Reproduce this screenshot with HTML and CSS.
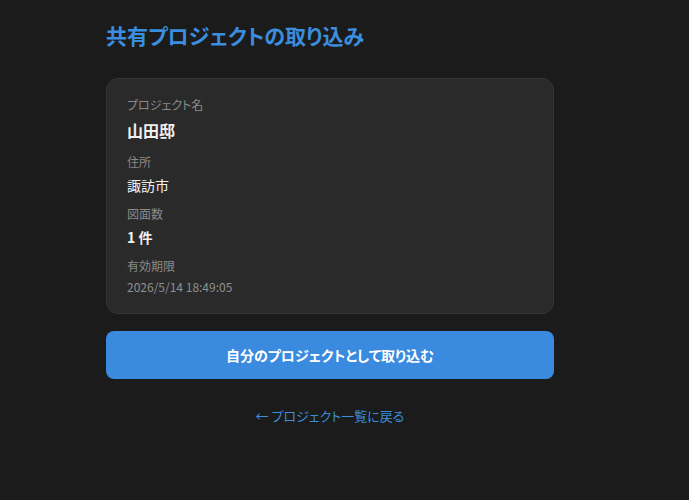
FILE: index.html
```html
<!DOCTYPE html>
<html lang="ja">
<head>
<meta charset="utf-8">
<title>共有プロジェクトの取り込み</title>
<link rel="stylesheet" href="styles.css">
</head>
<body>
<main class="page">
  <h1 class="title">共有プロジェクトの取り込み</h1>
  <section class="card">
    <div class="field">
      <div class="label">プロジェクト名</div>
      <div class="value value-name">山田邸</div>
    </div>
    <div class="field">
      <div class="label">住所</div>
      <div class="value">諏訪市</div>
    </div>
    <div class="field">
      <div class="label">図面数</div>
      <div class="value value-count">1 件</div>
    </div>
    <div class="field">
      <div class="label">有効期限</div>
      <div class="value value-date">2026/5/14 18:49:05</div>
    </div>
  </section>
  <button class="import-btn" type="button">自分のプロジェクトとして取り込む</button>
  <a class="back-link" href="#">← プロジェクト一覧に戻る</a>
</main>
</body>
</html>
```
FILE: styles.css
```css
html, body {
  margin: 0;
  padding: 0;
  background: #1b1b1b;
}
body {
  font-family: "Noto Sans CJK JP", "Noto Sans", sans-serif;
  font-feature-settings: "palt";
  color: #e8e8e8;
}
.page {
  width: 448px;
  padding: 21px 0 0 106px;
  display: flex;
  flex-direction: column;
}
.title {
  margin: 0 0 29px;
  font-size: 21px;
  line-height: 28px;
  font-weight: 700;
  color: #3b8ddf;
}
.card {
  background: #2a2a2a;
  border: 1px solid #353535;
  border-radius: 12px;
  padding: 18px 20px 17px;
  display: flex;
  flex-direction: column;
  gap: 10px;
}
.label {
  font-size: 12px;
  line-height: 16px;
  color: #8a8a8a;
  margin-bottom: 4px;
}
.value {
  font-size: 14px;
  line-height: 22px;
  color: #f0f0f0;
}
.value-name {
  font-size: 16px;
  line-height: 27px;
  font-weight: 700;
}
.value-count {
  font-weight: 700;
}
.value-date {
  font-size: 12px;
  line-height: 18px;
  color: #8f8f8f;
}
.import-btn {
  margin-top: 17px;
  height: 48px;
  border: none;
  border-radius: 8px;
  background: #3a8ae0;
  color: #ffffff;
  font-family: inherit;
  font-feature-settings: "palt";
  font-size: 14px;
  font-weight: 700;
}
.back-link {
  margin-top: 27px;
  align-self: center;
  font-size: 13px;
  line-height: 20px;
  color: #3b8ddf;
  text-decoration: none;
}
```
